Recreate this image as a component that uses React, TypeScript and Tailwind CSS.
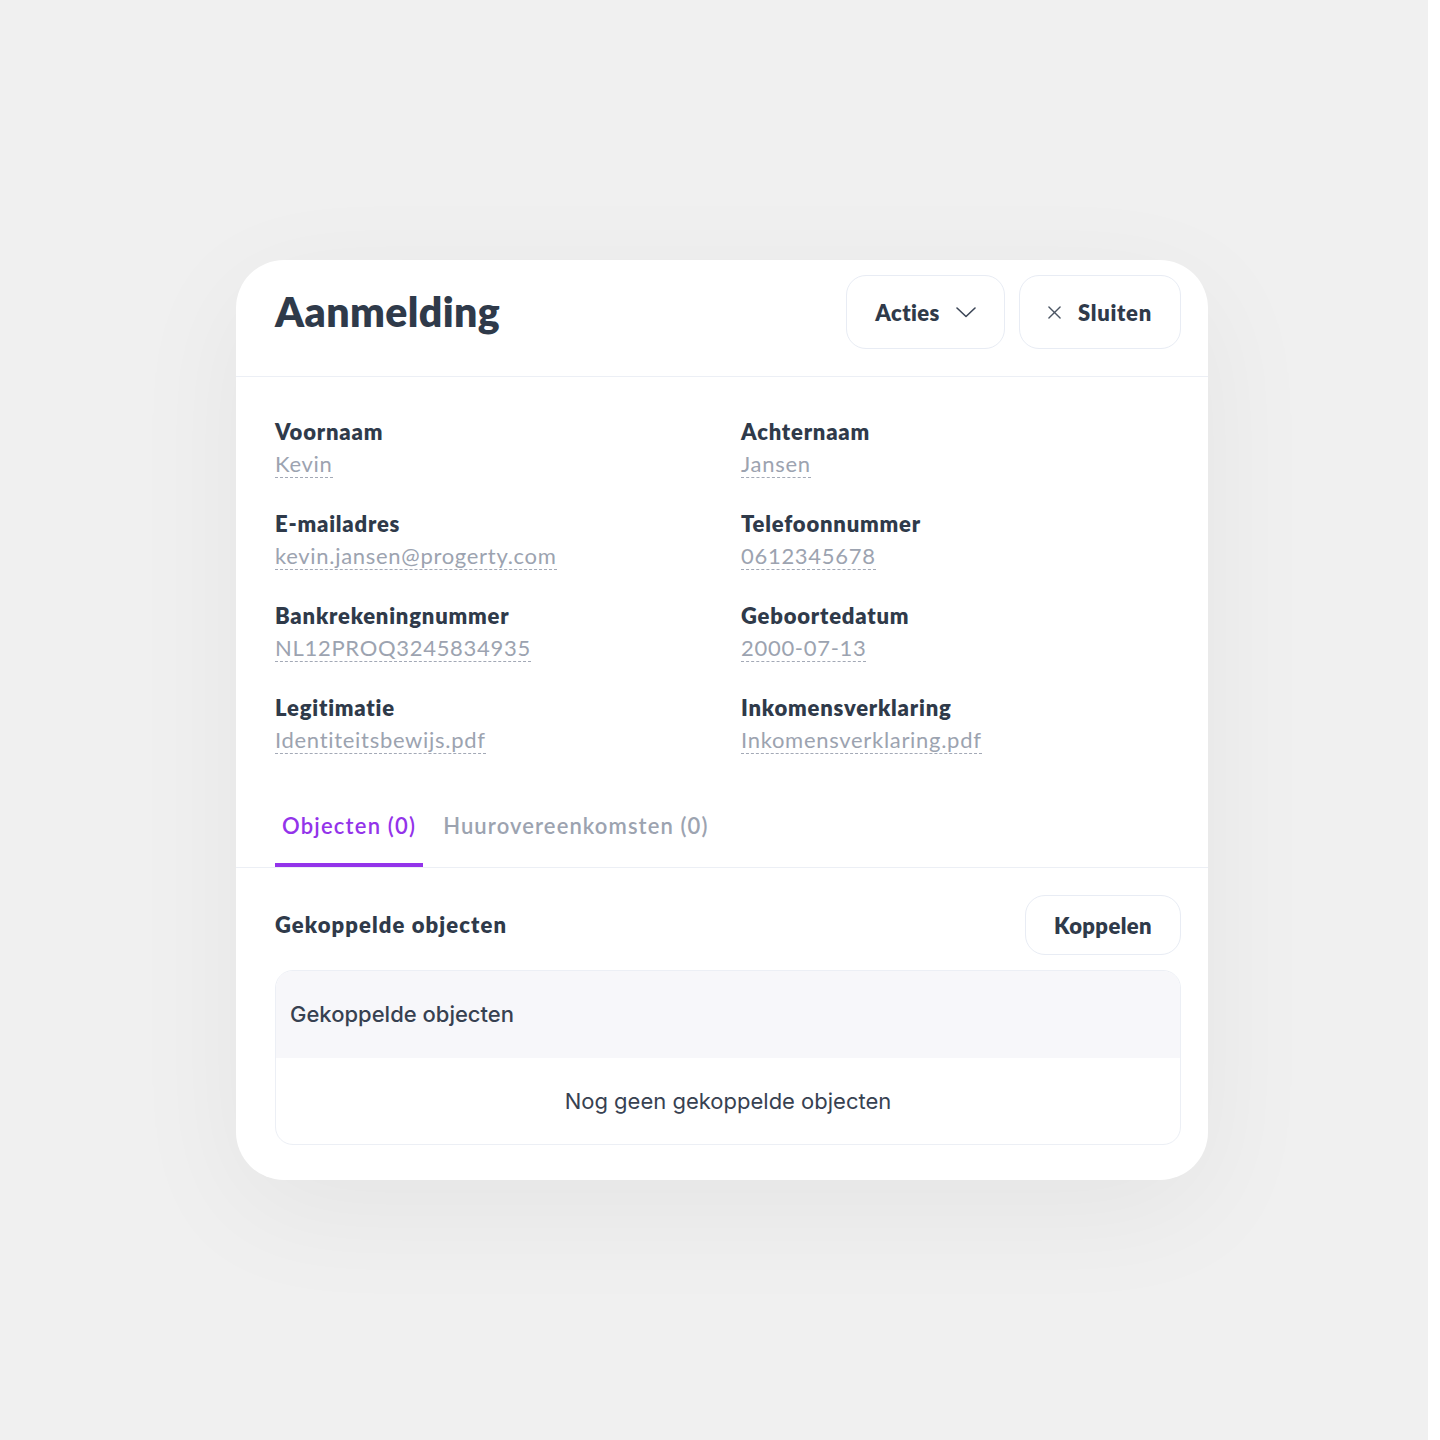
import React, { useState } from 'react';

// ============================================
// AANMELDING DETAIL CARD
// ============================================

const FIELDS: { label: string; value: string }[] = [
  { label: 'Voornaam', value: 'Kevin' },
  { label: 'Achternaam', value: 'Jansen' },
  { label: 'E-mailadres', value: 'kevin.jansen@progerty.com' },
  { label: 'Telefoonnummer', value: '0612345678' },
  { label: 'Bankrekeningnummer', value: 'NL12PROQ3245834935' },
  { label: 'Geboortedatum', value: '2000-07-13' },
  { label: 'Legitimatie', value: 'Identiteitsbewijs.pdf' },
  { label: 'Inkomensverklaring', value: 'Inkomensverklaring.pdf' },
];

const ChevronDown = () => (
  <svg width="20" height="11" viewBox="0 0 20 11" fill="none" stroke="currentColor" strokeWidth={1.6} strokeLinecap="round" strokeLinejoin="round">
    <path d="M1 1l9 8.5L19 1" />
  </svg>
);

const XIcon = () => (
  <svg width="13" height="13" viewBox="0 0 14 14" fill="none" stroke="currentColor" strokeWidth={1.5} strokeLinecap="round">
    <path d="M1 1l12 12M13 1L1 13" />
  </svg>
);

export default function App() {
  const [activeTab, setActiveTab] = useState<'objecten' | 'huur'>('objecten');

  return (
    <div className="flex w-full bg-white" style={{ fontFamily: 'Lato, "Noto Sans", sans-serif' }}>
      <div className="w-[1428px] h-[1440px] bg-[#f0f0f0] pt-[260px] pl-[236px]">
        <div className="w-[972px] rounded-[48px] bg-white shadow-[0_30px_120px_rgba(0,0,0,0.05)]">
          {/* Header */}
          <div className="flex items-center justify-between pl-[39px] pr-[27px] pt-[15px] pb-[27px] border-b border-[#eceff5]">
            <h1 className="text-[41px] font-extrabold text-[#2f3a4a] tracking-[0.4px]">Aanmelding</h1>
            <div className="flex gap-[14px]">
              <button className="h-[74px] w-[159px] flex items-center justify-center gap-[16px] rounded-[20px] border border-[#e8ecf4] text-[22px] font-extrabold tracking-[0.4px] text-[#2f3a4a]">
                Acties
                <span className="text-[#3b4556]"><ChevronDown /></span>
              </button>
              <button className="h-[74px] w-[162px] flex items-center justify-center gap-[17px] rounded-[20px] border border-[#e8ecf4] text-[22px] font-extrabold tracking-[0.7px] text-[#2f3a4a]">
                <span className="text-[#4b5563]"><XIcon /></span>
                Sluiten
              </button>
            </div>
          </div>

          {/* Fields */}
          <div className="grid grid-cols-2 gap-x-[26px] gap-y-[32px] pl-[39px] pr-[27px] pt-[41px]">
            {FIELDS.map((f) => (
              <div key={f.label} className="flex flex-col items-start">
                <div className="text-[22px] leading-[28px] font-extrabold tracking-[0.8px] text-[#2f3a4a]">{f.label}</div>
                <div className="mt-[5px] text-[22px] leading-[26px] tracking-[0.7px] text-[#9ca3b0] border-b border-dashed border-[#a3a9b6]">
                  {f.value}
                </div>
              </div>
            ))}
          </div>

          {/* Tabs */}
          <div className="mt-[56px] flex gap-[13px] pl-[39px] border-b border-[#eceff5]">
            <button
              onClick={() => setActiveTab('objecten')}
              className={`px-[7px] pt-[2px] pb-[23px] text-[22px] leading-[28px] font-semibold tracking-[1.2px] border-b-4 ${
                activeTab === 'objecten' ? 'text-[#9333ea] border-[#9333ea]' : 'text-[#9ca3b0] border-transparent'
              }`}
            >
              Objecten (0)
            </button>
            <button
              onClick={() => setActiveTab('huur')}
              className={`px-[7px] pt-[2px] pb-[23px] text-[22px] leading-[28px] font-semibold tracking-[1.1px] border-b-4 ${
                activeTab === 'huur' ? 'text-[#9333ea] border-[#9333ea]' : 'text-[#9ca3b0] border-transparent'
              }`}
            >
              Huurovereenkomsten (0)
            </button>
          </div>

          {/* Linked objects */}
          <div className="pl-[39px] pr-[27px] pt-[27px] pb-[35px]">
            <div className="flex items-center justify-between">
              <h2 className="text-[22px] leading-[28px] pb-[1px] font-extrabold tracking-[1.1px] text-[#2f3a4a]">Gekoppelde objecten</h2>
              <button className="h-[60px] w-[156px] rounded-[20px] border border-[#e8ecf4] text-[22px] font-extrabold tracking-[0.4px] text-[#2f3a4a]">
                Koppelen
              </button>
            </div>

            <div
              className="mt-[15px] rounded-[18px] border border-[#eceff5] overflow-hidden"
              style={{ fontFamily: 'Inter, "Noto Sans", sans-serif' }}
            >
              <div className="h-[87px] flex items-center px-[14px] bg-[#f7f7fa] text-[22px] font-medium text-[#374151]">
                Gekoppelde objecten
              </div>
              <div className="h-[86px] flex items-center justify-center text-[22px] text-[#374151]">
                Nog geen gekoppelde objecten
              </div>
            </div>
          </div>
        </div>
      </div>
    </div>
  );
}
